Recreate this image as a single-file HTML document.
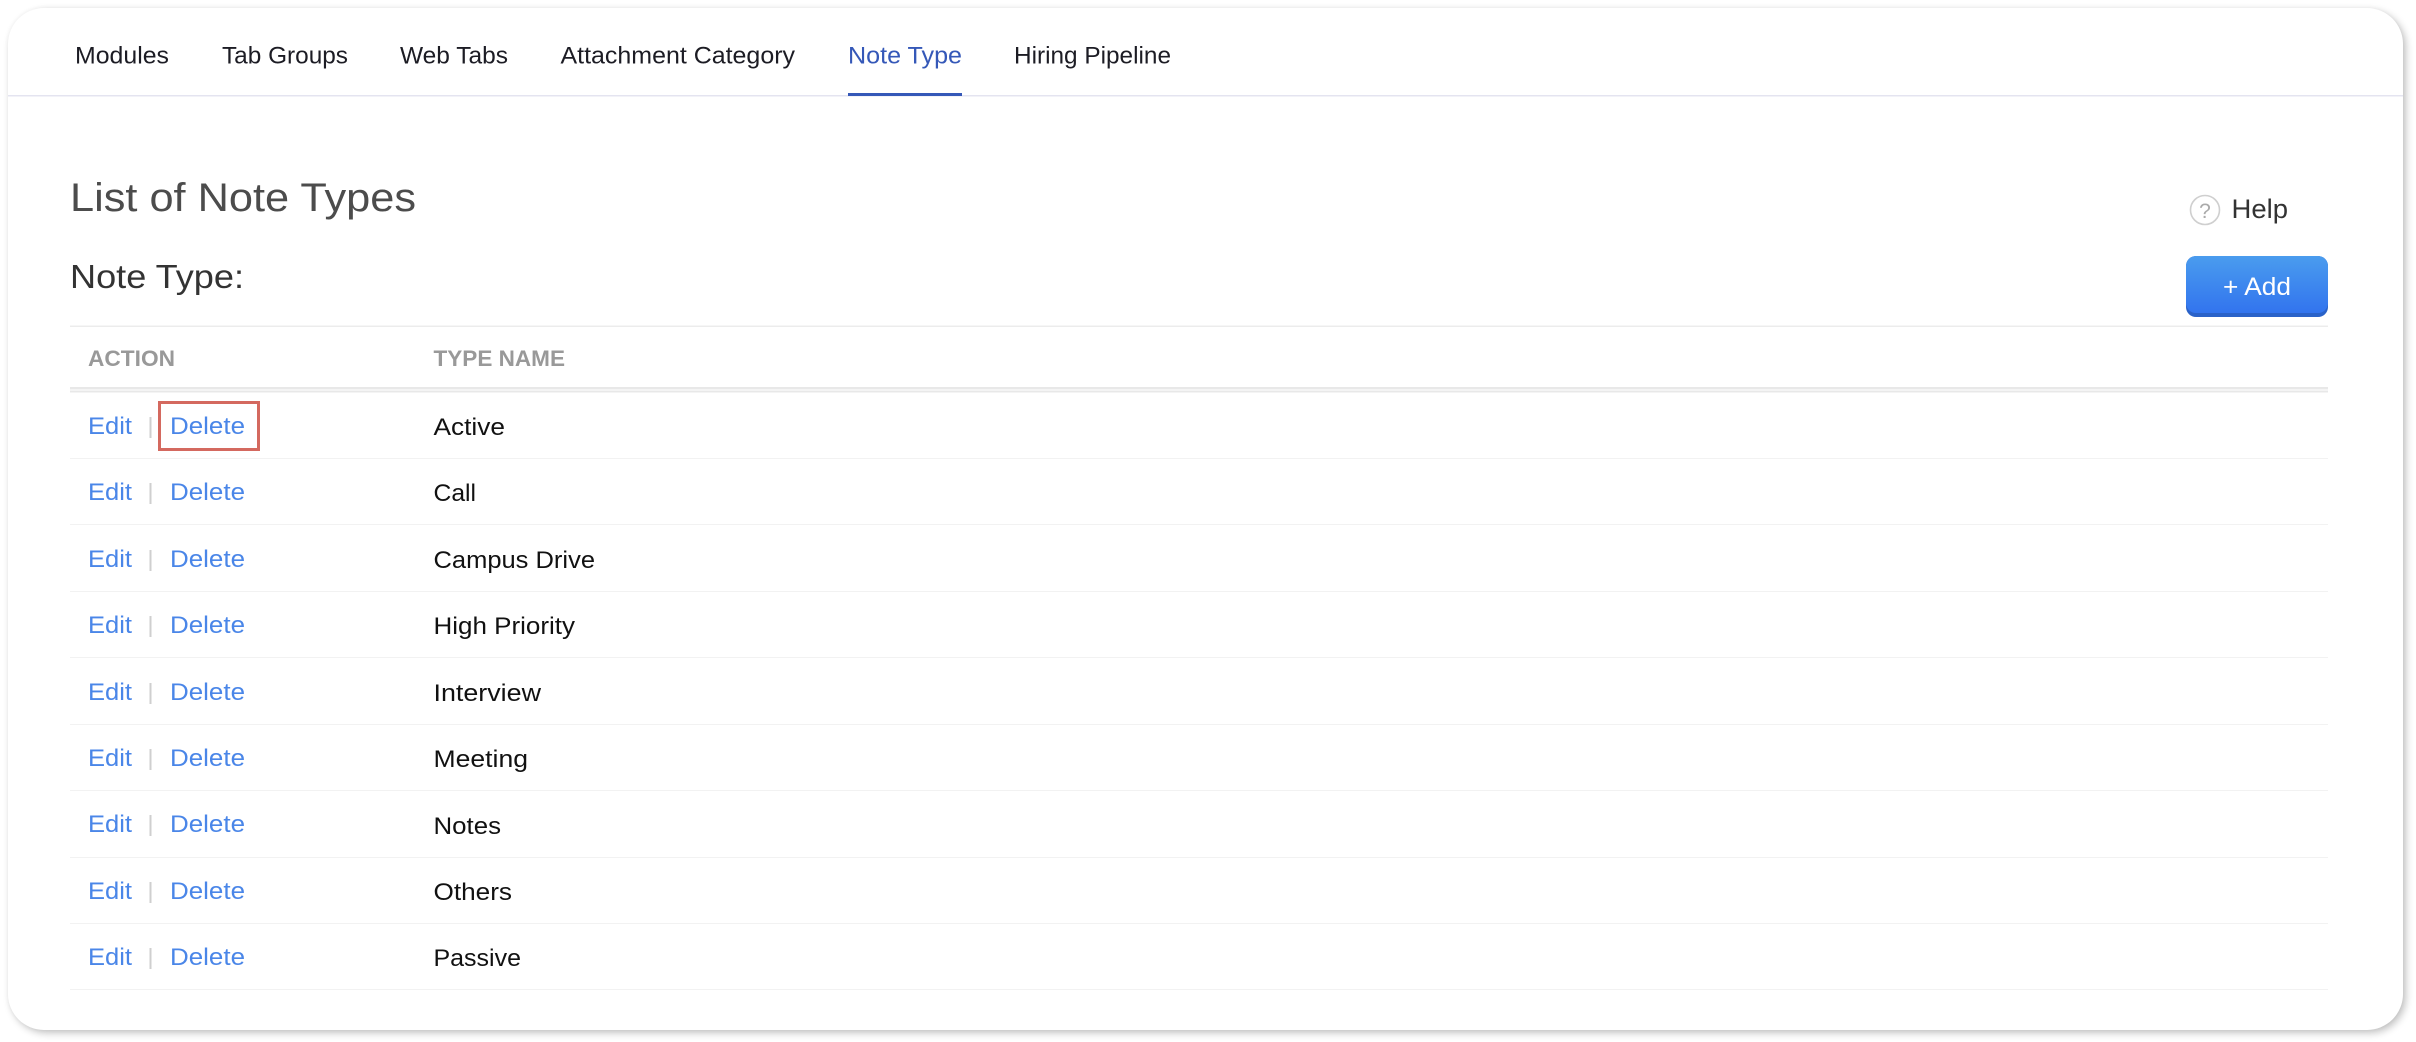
<!DOCTYPE html>
<html lang="en">
<head>
<meta charset="utf-8">
<title>List of Note Types</title>
<style>
html,body{margin:0;padding:0;background:#fff;width:2416px;height:1042px;overflow:hidden}
#card{position:absolute;left:8px;top:8px;width:2395px;height:1022px;background:#fff;border-radius:36px;box-shadow:3px 3px 8px rgba(0,0,0,.24),0 0 5px rgba(0,0,0,.04)}
svg{position:absolute;left:0;top:0}
text{font-family:"Liberation Sans",sans-serif;font-size:24px}
.tab{fill:#1c1c24;font-size:24px}
.e{fill:#4a86e8}
.n{fill:#111}
.h{fill:#999;font-size:22px;font-weight:700}
</style>
</head>
<body>
<div id="card"></div>
<svg width="2416" height="1042" viewBox="0 0 2416 1042" xmlns="http://www.w3.org/2000/svg">
<defs><linearGradient id="g" x1="0" y1="0" x2="0" y2="1"><stop offset="0" stop-color="#4a9cee"/><stop offset="1" stop-color="#3274ee"/></linearGradient></defs>
<rect x="8" y="95" width="2395" height="1.5" fill="#e4e4f0"/>
<text class="tab" x="75" y="63.500" textLength="94" lengthAdjust="spacingAndGlyphs">Modules</text>
<text class="tab" x="222" y="63.500" textLength="126" lengthAdjust="spacingAndGlyphs">Tab Groups</text>
<text class="tab" x="400" y="63.500" textLength="108" lengthAdjust="spacingAndGlyphs">Web Tabs</text>
<text class="tab" x="560.500" y="63.500" textLength="234.500" lengthAdjust="spacingAndGlyphs">Attachment Category</text>
<text class="tab" x="848" y="63.500" textLength="114" lengthAdjust="spacingAndGlyphs" style="fill:#3558b8">Note Type</text>
<text class="tab" x="1014" y="63.500" textLength="157" lengthAdjust="spacingAndGlyphs">Hiring Pipeline</text>
<rect x="848" y="93" width="114" height="3" fill="#3558b8"/>

<text x="70" y="211" textLength="346" lengthAdjust="spacingAndGlyphs" style="font-size:40px;fill:#4c4c4c">List of Note Types</text>
<text x="70" y="288" textLength="174" lengthAdjust="spacingAndGlyphs" style="font-size:33px;fill:#333">Note Type:</text>

<circle cx="2205" cy="210" r="14.5" fill="#fff" stroke="#cfcfcf" stroke-width="1.6"/>
<text x="2205" y="218" text-anchor="middle" style="font-size:21px;fill:#aaa">?</text>
<text x="2231.500" y="218" textLength="56.500" lengthAdjust="spacingAndGlyphs" style="font-size:27px;fill:#333">Help</text>

<rect x="2186" y="256" width="142" height="61" rx="10" fill="#2a62c8"/>
<path d="M2196 256h122a10 10 0 0 1 10 10v37a10 10 0 0 1-10 10h-122a10 10 0 0 1-10-10v-37a10 10 0 0 1 10-10z" fill="url(#g)"/>
<text x="2223" y="295" textLength="68" lengthAdjust="spacingAndGlyphs" style="font-size:25px;fill:#fff">+ Add</text>

<rect x="70" y="325.500" width="2258" height="1.500" fill="#ececec"/>
<text class="h" x="88" y="366" textLength="87" lengthAdjust="spacingAndGlyphs">ACTION</text>
<text class="h" x="433.500" y="366" textLength="131.500" lengthAdjust="spacingAndGlyphs">TYPE NAME</text>
<rect x="70" y="387" width="2258" height="2.500" fill="#e8e8e8"/>
<rect x="70" y="390.500" width="2258" height="2" fill="#e8e8e8"/>

<g fill="#f2f2f2">
<rect x="70" y="458" width="2258" height="1"/>
<rect x="70" y="524" width="2258" height="1"/>
<rect x="70" y="591" width="2258" height="1"/>
<rect x="70" y="657" width="2258" height="1"/>
<rect x="70" y="724" width="2258" height="1"/>
<rect x="70" y="790" width="2258" height="1"/>
<rect x="70" y="857" width="2258" height="1"/>
<rect x="70" y="923" width="2258" height="1"/>
<rect x="70" y="989" width="2258" height="1"/>
</g>

<g fill="#cfcfcf">
<rect x="149.500" y="417" width="2" height="21"/>
<rect x="149.500" y="483" width="2" height="21"/>
<rect x="149.500" y="550" width="2" height="21"/>
<rect x="149.500" y="616" width="2" height="21"/>
<rect x="149.500" y="683" width="2" height="21"/>
<rect x="149.500" y="749" width="2" height="21"/>
<rect x="149.500" y="815" width="2" height="21"/>
<rect x="149.500" y="882" width="2" height="21"/>
<rect x="149.500" y="948" width="2" height="21"/>
</g>

<text class="e" x="88" y="434" textLength="44" lengthAdjust="spacingAndGlyphs">Edit</text>
<text class="e" x="170" y="434" textLength="75" lengthAdjust="spacingAndGlyphs">Delete</text>
<text class="n" x="433.500" y="435" textLength="71.500" lengthAdjust="spacingAndGlyphs">Active</text>
<text class="e" x="88" y="500" textLength="44" lengthAdjust="spacingAndGlyphs">Edit</text>
<text class="e" x="170" y="500" textLength="75" lengthAdjust="spacingAndGlyphs">Delete</text>
<text class="n" x="433.500" y="501" textLength="42.500" lengthAdjust="spacingAndGlyphs">Call</text>
<text class="e" x="88" y="567" textLength="44" lengthAdjust="spacingAndGlyphs">Edit</text>
<text class="e" x="170" y="567" textLength="75" lengthAdjust="spacingAndGlyphs">Delete</text>
<text class="n" x="433.500" y="568" textLength="161.500" lengthAdjust="spacingAndGlyphs">Campus Drive</text>
<text class="e" x="88" y="633" textLength="44" lengthAdjust="spacingAndGlyphs">Edit</text>
<text class="e" x="170" y="633" textLength="75" lengthAdjust="spacingAndGlyphs">Delete</text>
<text class="n" x="433.500" y="634" textLength="141.500" lengthAdjust="spacingAndGlyphs">High Priority</text>
<text class="e" x="88" y="700" textLength="44" lengthAdjust="spacingAndGlyphs">Edit</text>
<text class="e" x="170" y="700" textLength="75" lengthAdjust="spacingAndGlyphs">Delete</text>
<text class="n" x="433.500" y="701" textLength="107.500" lengthAdjust="spacingAndGlyphs">Interview</text>
<text class="e" x="88" y="766" textLength="44" lengthAdjust="spacingAndGlyphs">Edit</text>
<text class="e" x="170" y="766" textLength="75" lengthAdjust="spacingAndGlyphs">Delete</text>
<text class="n" x="433.500" y="767" textLength="94.500" lengthAdjust="spacingAndGlyphs">Meeting</text>
<text class="e" x="88" y="832" textLength="44" lengthAdjust="spacingAndGlyphs">Edit</text>
<text class="e" x="170" y="832" textLength="75" lengthAdjust="spacingAndGlyphs">Delete</text>
<text class="n" x="433.500" y="834" textLength="67.500" lengthAdjust="spacingAndGlyphs">Notes</text>
<text class="e" x="88" y="899" textLength="44" lengthAdjust="spacingAndGlyphs">Edit</text>
<text class="e" x="170" y="899" textLength="75" lengthAdjust="spacingAndGlyphs">Delete</text>
<text class="n" x="433.500" y="900" textLength="78.500" lengthAdjust="spacingAndGlyphs">Others</text>
<text class="e" x="88" y="965" textLength="44" lengthAdjust="spacingAndGlyphs">Edit</text>
<text class="e" x="170" y="965" textLength="75" lengthAdjust="spacingAndGlyphs">Delete</text>
<text class="n" x="433.500" y="966" textLength="87.500" lengthAdjust="spacingAndGlyphs">Passive</text>

<rect x="159.500" y="402.500" width="99" height="47" fill="none" stroke="#d4695f" stroke-width="3"/>
</svg>
</body>
</html>
